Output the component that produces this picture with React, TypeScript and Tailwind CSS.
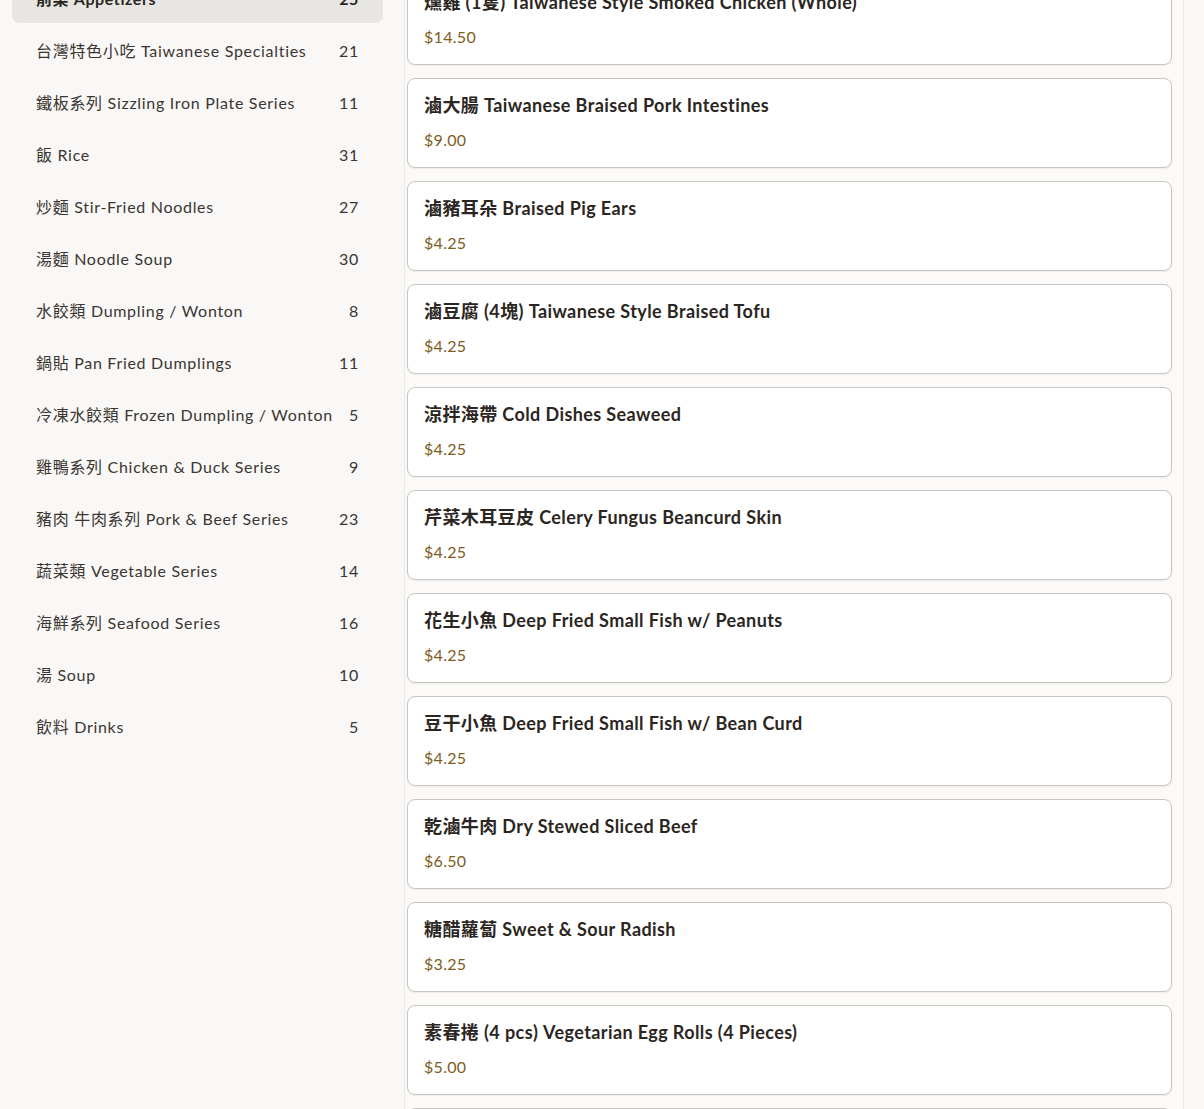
const categories = [
  { name: "前菜 Appetizers", count: 25, active: true },
  { name: "台灣特色小吃 Taiwanese Specialties", count: 21 },
  { name: "鐵板系列 Sizzling Iron Plate Series", count: 11 },
  { name: "飯 Rice", count: 31 },
  { name: "炒麵 Stir-Fried Noodles", count: 27 },
  { name: "湯麵 Noodle Soup", count: 30 },
  { name: "水餃類 Dumpling / Wonton", count: 8 },
  { name: "鍋貼 Pan Fried Dumplings", count: 11 },
  { name: "冷凍水餃類 Frozen Dumpling / Wonton", count: 5 },
  { name: "雞鴨系列 Chicken & Duck Series", count: 9 },
  { name: "豬肉 牛肉系列 Pork & Beef Series", count: 23 },
  { name: "蔬菜類 Vegetable Series", count: 14 },
  { name: "海鮮系列 Seafood Series", count: 16 },
  { name: "湯 Soup", count: 10 },
  { name: "飲料 Drinks", count: 5 }
];

const items = [
  { name: "燻雞 (1隻) Taiwanese Style Smoked Chicken (Whole)", price: "$14.50" },
  { name: "滷大腸 Taiwanese Braised Pork Intestines", price: "$9.00" },
  { name: "滷豬耳朵 Braised Pig Ears", price: "$4.25" },
  { name: "滷豆腐 (4塊) Taiwanese Style Braised Tofu", price: "$4.25" },
  { name: "涼拌海帶 Cold Dishes Seaweed", price: "$4.25" },
  { name: "芹菜木耳豆皮 Celery Fungus Beancurd Skin", price: "$4.25" },
  { name: "花生小魚 Deep Fried Small Fish w/ Peanuts", price: "$4.25" },
  { name: "豆干小魚 Deep Fried Small Fish w/ Bean Curd", price: "$4.25" },
  { name: "乾滷牛肉 Dry Stewed Sliced Beef", price: "$6.50" },
  { name: "糖醋蘿蔔 Sweet & Sour Radish", price: "$3.25" },
  { name: "素春捲 (4 pcs) Vegetarian Egg Rolls (4 Pieces)", price: "$5.00" },
  { name: "炸春捲 (4 pcs) Fried Spring Rolls (4 Pieces)", price: "$5.00" }
];

export default function App() {
  return (
    <div
      className="h-[1109px] overflow-hidden bg-[#f9f8f6] text-[#2b2622]"
      style={{ fontFamily: 'Lato, "Noto Sans CJK TC", sans-serif' }}
    >
      <div className="-mt-[25px] flex items-start">
        <nav className="ml-3 flex w-[371px] shrink-0 flex-col gap-1">
          {categories.map((category) => (
            <a
              className={
                category.active
                  ? "flex h-12 items-center justify-between rounded-lg bg-[#e7e6e3] px-6 text-base font-bold tracking-[0.6px] text-[#2b2622]"
                  : "flex h-12 items-center justify-between rounded-lg px-6 text-base tracking-[0.7px] text-[#3b3632]"
              }
              href="#"
              key={category.name}
            >
              <span>{category.name}</span>
              <span>{category.count}</span>
            </a>
          ))}
        </nav>

        <main className="ml-[21px] flex w-[780px] flex-col gap-[13px] border-x border-[#ece9e5] bg-[#fbfaf9] pl-[2px] pr-[11px]">
          {items.map((item) => (
            <div
              className="rounded-lg border border-[#c9c6c2] bg-white px-4 py-4 shadow-[0_1px_2px_rgba(0,0,0,0.06)]"
              key={item.name}
            >
              <h3 className="text-lg font-bold leading-[20px] tracking-[0.4px] text-[#2b2622]">{item.name}</h3>
              <p className="mt-[14px] text-base leading-[22px] tracking-[0.3px] text-[#7d5d22]">{item.price}</p>
            </div>
          ))}
        </main>
      </div>
    </div>
  );
}
